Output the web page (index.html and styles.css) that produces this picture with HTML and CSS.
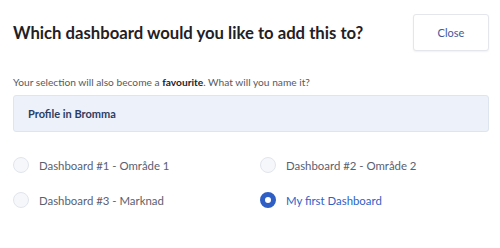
FILE: index.html
```html
<!DOCTYPE html>
<html lang="en">
<head>
  <meta charset="UTF-8">
  <meta name="viewport" content="width=device-width, initial-scale=1.0">
  <title>Add to dashboard</title>
  <link rel="stylesheet" href="styles.css">
</head>
<body>
  <div class="modal">
    <div class="modal-header">
      <h2>Which dashboard would you like to add this to?</h2>
      <button class="close-btn">Close</button>
    </div>
    <p class="hint">Your selection will also become a <b>favourite</b>. What will you name it?</p>
    <input type="text" class="name-input" value="Profile in Bromma">
    <div class="options">
      <label class="option"><span class="radio"></span>Dashboard #1 - Område 1</label>
      <label class="option"><span class="radio"></span>Dashboard #2 - Område 2</label>
      <label class="option"><span class="radio"></span>Dashboard #3 - Marknad</label>
      <label class="option selected"><span class="radio"></span>My first Dashboard</label>
    </div>
  </div>
</body>
</html>
```

FILE: styles.css
```css
body {
  margin: 0;
  background: #fff;
  font-family: Lato, "Noto Sans", sans-serif;
  color: #1f2126;
}
.modal {
  padding: 14px 11px 0 13px;
}
.modal-header {
  display: flex;
  justify-content: space-between;
  align-items: center;
}
.modal-header h2 {
  margin: 0;
  font-size: 16.7px;
  font-weight: 700;
  color: #1f2126;
}
.close-btn {
  width: 76px;
  height: 37px;
  background: #fff;
  border: 1px solid #e3e6ec;
  border-radius: 3px;
  box-shadow: 0 1px 2px rgba(0, 0, 0, 0.06);
  color: #3c5a9c;
  font-family: inherit;
  font-size: 11px;
  cursor: pointer;
}
.hint {
  margin: 25px 0 7px;
  font-size: 10.2px;
  color: #555a63;
}
.hint b {
  color: #1f2126;
}
.name-input {
  display: block;
  width: 100%;
  height: 37px;
  box-sizing: border-box;
  padding: 0 14px;
  background: #edf1f9;
  border: 1px solid #dfe5ef;
  border-radius: 3px;
  font-family: inherit;
  font-size: 11px;
  font-weight: 700;
  color: #2c3d63;
}
.options {
  display: grid;
  grid-template-columns: 1fr 1fr;
  column-gap: 18px;
  row-gap: 19px;
  margin-top: 25px;
}
.option {
  display: flex;
  align-items: center;
  gap: 10px;
  font-size: 11.4px;
  color: #5b6070;
}
.radio {
  width: 14px;
  height: 14px;
  border: 1px solid #e1e5ec;
  border-radius: 50%;
  background: #f6f7fa;
}
.option.selected {
  color: #2f5fc4;
}
.option.selected .radio {
  width: 6px;
  height: 6px;
  border: 5px solid #2f5fc4;
  background: #fff;
}
```
